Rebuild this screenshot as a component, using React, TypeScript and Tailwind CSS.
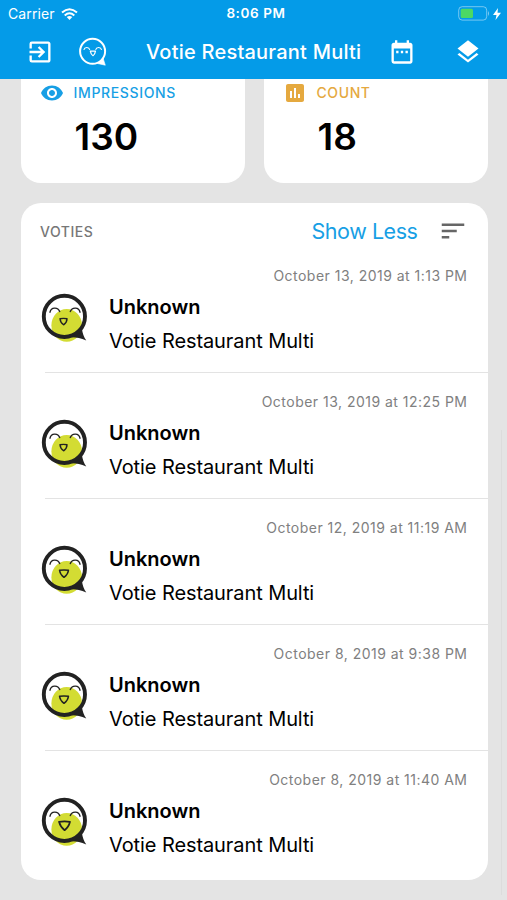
import { MdDateRange, MdExitToApp, MdInsertChart, MdLayers, MdRemoveRedEye, MdSort } from 'react-icons/md';

type Mouth = 'small' | 'medium' | 'large';

interface Vote {
    date: string;
    name: string;
    place: string;
    mouth: Mouth;
}

const votes: Vote[] = [
    { date: 'October 13, 2019 at 1:13 PM', name: 'Unknown', place: 'Votie Restaurant Multi', mouth: 'small' },
    { date: 'October 13, 2019 at 12:25 PM', name: 'Unknown', place: 'Votie Restaurant Multi', mouth: 'small' },
    { date: 'October 12, 2019 at 11:19 AM', name: 'Unknown', place: 'Votie Restaurant Multi', mouth: 'medium' },
    { date: 'October 8, 2019 at 9:38 PM', name: 'Unknown', place: 'Votie Restaurant Multi', mouth: 'medium' },
    { date: 'October 8, 2019 at 11:40 AM', name: 'Unknown', place: 'Votie Restaurant Multi', mouth: 'large' },
];

const mouthPaths: Record<Mouth, string> = {
    small: 'M20 25.8 Q23.5 25 27 25.8 Q27 29.5 23.6 31.8 Q20.3 29.5 20 25.8 Z',
    medium: 'M19.5 25.3 Q24 24.7 28.5 25.3 Q27.8 29.5 24 32.4 Q20.2 29.5 19.5 25.3 Z',
    large: 'M19 24.8 Q24.5 24 30 24.8 Q28.8 30 24.6 33.2 Q20.4 30 19 24.8 Z',
};

function VotieFace({ mouth }: { mouth: Mouth }) {
    return (
        <svg viewBox="0 0 48 50" className="h-[50px] w-12 shrink-0" fill="none">
            <ellipse cx="26.7" cy="32.3" rx="15.3" ry="16.4" fill="#d3dc33" />
            <path d="M31.5 44.2 Q38 44 46.3 47.5 Q42.8 43 41.8 35 Z" fill="#222" />
            <circle cx="24.4" cy="23.4" r="20.6" stroke="#222" strokeWidth="3.9" />
            <path
                d="M10 19.2 C11 13.9 18 13.9 19.7 18.5 M30.3 18.5 C32 13.9 39 13.9 40 19.2"
                stroke="#222"
                strokeWidth="1.4"
                strokeLinecap="round"
            />
            <path d={mouthPaths[mouth]} stroke="#222" strokeWidth={mouth === 'large' ? 1.7 : 1.4} strokeLinejoin="round" />
        </svg>
    );
}

function VotieLogo() {
    return (
        <svg viewBox="0 0 28 30" className="h-[30px] w-7" fill="none" stroke="white" strokeLinejoin="round">
            <circle cx="13.6" cy="14.3" r="12.5" strokeWidth="2" />
            <path d="M18.5 26.5 L26.3 28.2 L24 21 Z" fill="white" strokeWidth="0.6" />
            <path d="M4.8 12.8 C5.6 9.8 10 9.8 10.8 12.8 M16.6 12.8 C17.4 9.8 21.8 9.8 22.6 12.8" strokeWidth="1.1" />
            <path d="M11.3 14.2 H16.5 Q16 17.5 14 18.7 Q11.9 17.5 11.3 14.2 Z" strokeWidth="1.2" />
        </svg>
    );
}

function StatusBar() {
    return (
        <div className="flex h-[27px] items-center">
            <div className="flex w-[190px] items-center gap-[6px] pl-[8px]">
                <span className="text-[14px] leading-none tracking-[0.1px]">Carrier</span>
                <svg viewBox="0 0 17 12" className="h-3 w-[17px]" fill="none" stroke="white" strokeWidth="2">
                    <path d="M1 4.6 Q8.5 -2.2 16 4.6" />
                    <path d="M3.7 7.4 Q8.5 3.2 13.3 7.4" />
                    <path d="M8.5 12 L5.7 9.1 Q8.5 7 11.3 9.1 Z" fill="white" stroke="none" />
                </svg>
            </div>
            <div className="w-[132px] pt-px text-center text-[13.5px] font-semibold leading-none tracking-[0.6px]">8:06 PM</div>
            <div className="ml-auto flex items-center gap-[3px] pr-[6px]">
                <svg viewBox="0 0 32 15" className="h-[15px] w-8">
                    <rect x="0.7" y="0.7" width="28" height="13.4" rx="3.5" fill="none" stroke="white" strokeOpacity="0.45" />
                    <rect x="2.7" y="2.7" width="12.3" height="9.4" rx="1.5" fill="#4cd964" />
                    <path d="M30 5 Q32 7.5 30 10 Z" fill="white" fillOpacity="0.5" />
                </svg>
                <svg viewBox="0 0 8 12" className="h-3 w-2" fill="white">
                    <path d="M5 0 L0 7 H3.5 L2.5 12 L8 4.8 H4.5 Z" />
                </svg>
            </div>
        </div>
    );
}

export default function App() {
    return (
        <div className="relative flex h-[900px] w-[507px] flex-col overflow-hidden bg-[#e4e4e4] font-['Inter','Liberation_Sans',sans-serif] text-black">
            <header className="h-[79px] shrink-0 bg-[#049be8] text-white">
                <StatusBar />
                <div className="flex h-[50px] items-center pl-[26px] pr-[25px]">
                    <MdExitToApp className="mr-[25px] size-[28px]" />
                    <VotieLogo />
                    <h1 className="ml-[39px] w-[217px] whitespace-nowrap text-[20px] font-medium tracking-[0.23px]">Votie Restaurant Multi</h1>
                    <MdDateRange className="ml-auto size-[28px]" />
                    <MdLayers className="ml-[38px] size-[28px]" />
                </div>
            </header>

            <main className="pl-[20.5px] pr-[19.5px]">
                {/* Counters, scrolled partly under the header */}
                <div className="grid grid-cols-2 gap-[19px]">
                    <section className="h-[104px] rounded-b-[20px] bg-white pl-[19px] pt-[2px]">
                        <div className="flex h-6 items-center gap-[10px] text-[#179fe5]">
                            <MdRemoveRedEye className="size-6" />
                            <span className="text-[14px] font-medium leading-[22px] tracking-[0.65px]">IMPRESSIONS</span>
                        </div>
                        <p className="ml-[35px] mt-[9px] text-[37px] font-semibold leading-[46px]">130</p>
                    </section>
                    <section className="h-[104px] rounded-b-[20px] bg-white pl-[19px] pt-[2px]">
                        <div className="flex h-6 items-center gap-[10px] text-[#e5a93f]">
                            <MdInsertChart className="size-6" />
                            <span className="text-[14px] font-medium leading-[22px] tracking-[0.6px]">COUNT</span>
                        </div>
                        <p className="ml-[35px] mt-[9px] text-[37px] font-semibold leading-[46px]">18</p>
                    </section>
                </div>

                <section className="mt-5 h-[677px] rounded-[20px] bg-white">
                    <div className="flex h-[56px] items-center pl-[19.5px] pr-5">
                        <h2 className="text-[14px] font-medium tracking-[0.5px] text-[#777]">VOTIES</h2>
                        <span className="ml-auto text-[21.5px] tracking-[-0.45px] text-[#179fe5]">Show Less</span>
                        <MdSort className="ml-[20px] size-[30px] text-[#666]" />
                    </div>
                    {votes.map((vote, i) => (
                        <article key={vote.date} className={i === 0 ? 'h-[114px]' : 'h-[126px] pt-3'}>
                            <time className="block h-[34px] pr-[20px] text-right text-[14px] leading-[33px] tracking-[0.48px] text-[#808080]">
                                {vote.date}
                            </time>
                            <div className="flex pl-[19.5px]">
                                <VotieFace mouth={vote.mouth} />
                                <div className="-mt-[1px] ml-[21px]">
                                    <p className="text-[20px] font-semibold leading-[31px]">{vote.name}</p>
                                    <p className="text-[20px] leading-[36px] tracking-[-0.09px]">{vote.place}</p>
                                </div>
                            </div>
                            {i < votes.length - 1 && <div className="ml-6 mt-[13px] h-px bg-[#e3e3e3]" />}
                        </article>
                    ))}
                </section>
            </main>

            {/* Fading scroll indicator */}
            <div className="absolute right-[5px] top-[430px] h-[465px] w-px bg-[#dcdcdc]" />
        </div>
    );
}
